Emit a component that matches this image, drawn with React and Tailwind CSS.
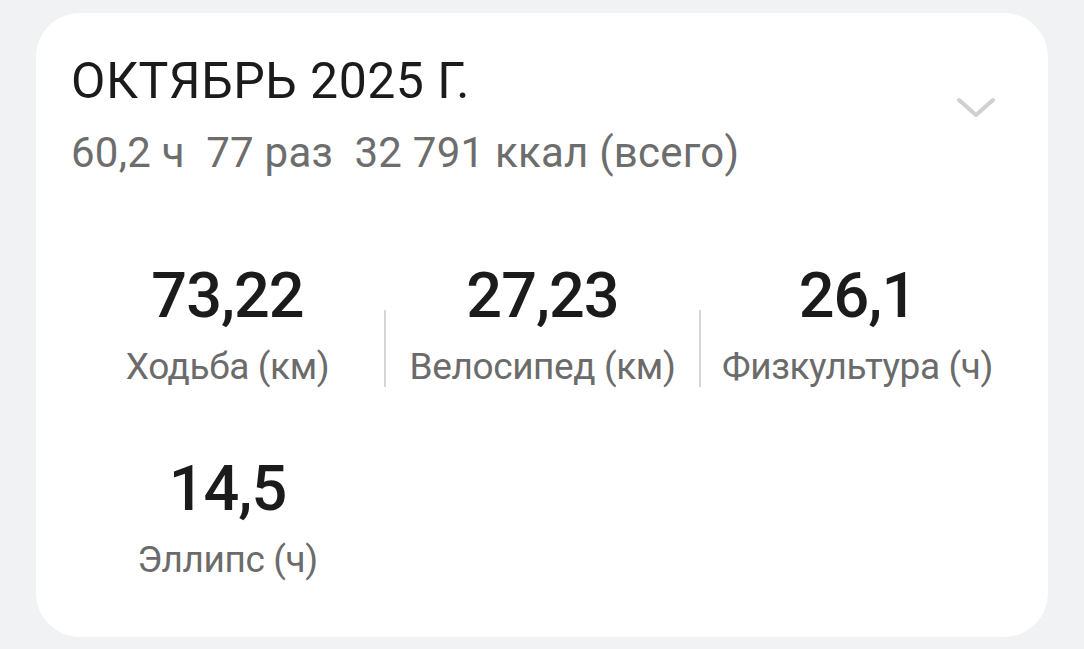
import React from "react";

const stats = [
  { value: "73,22", label: "Ходьба (км)" },
  { value: "27,23", label: "Велосипед (км)" },
  { value: "26,1", label: "Физкультура (ч)" },
];

const Stat = ({ value, label }) => (
  <div className="w-[313px] flex flex-col items-center">
    <div className="text-[63px] leading-[74px] font-medium tracking-[-1px] text-[#1b1b1b]">
      {value}
    </div>
    <div className="mt-[11px] text-[37px] leading-[45px] tracking-[-0.4px] text-[#6b6b6b] whitespace-nowrap">
      {label}
    </div>
  </div>
);

const Divider = () => (
  <div className="w-[2px] h-[77px] self-end mb-[2px] bg-[#d6d6d6]" />
);

export default function App() {
  return (
    <div
      className="w-[1084px] h-[649px] bg-[#f1f2f4] pt-[13px] pl-[36px]"
      style={{ fontFamily: "Roboto, 'Noto Sans', sans-serif" }}
    >
      <div className="w-[1012px] h-[624px] bg-white rounded-[44px] pt-[39px] pl-[35px] pr-[32px]">
        {/* Header */}
        <div className="flex justify-between items-start">
          <div>
            <div className="text-[50px] leading-[58px] tracking-[0.5px] text-[#1b1b1b]">
              ОКТЯБРЬ 2025 Г.
            </div>
            <div className="mt-[18px] text-[42px] leading-[50px] tracking-[0.25px] text-[#6d6d6d] whitespace-pre">
              60,2 ч  77 раз  32 791 ккал (всего)
            </div>
          </div>
          <svg
            width="40"
            height="21"
            viewBox="0 0 40 21"
            className="mt-[45px] mr-[20px]"
            fill="none"
          >
            <path
              d="M3 3 L20 18 L37 3"
              stroke="#d0d0d0"
              strokeWidth="4"
              strokeLinecap="round"
              strokeLinejoin="round"
            />
          </svg>
        </div>

        {/* Stats */}
        <div className="mt-[81px] flex">
          <Stat {...stats[0]} />
          <Divider />
          <Stat {...stats[1]} />
          <Divider />
          <Stat {...stats[2]} />
        </div>
        <div className="mt-[63px] flex">
          <Stat value="14,5" label="Эллипс (ч)" />
        </div>
      </div>
    </div>
  );
}
